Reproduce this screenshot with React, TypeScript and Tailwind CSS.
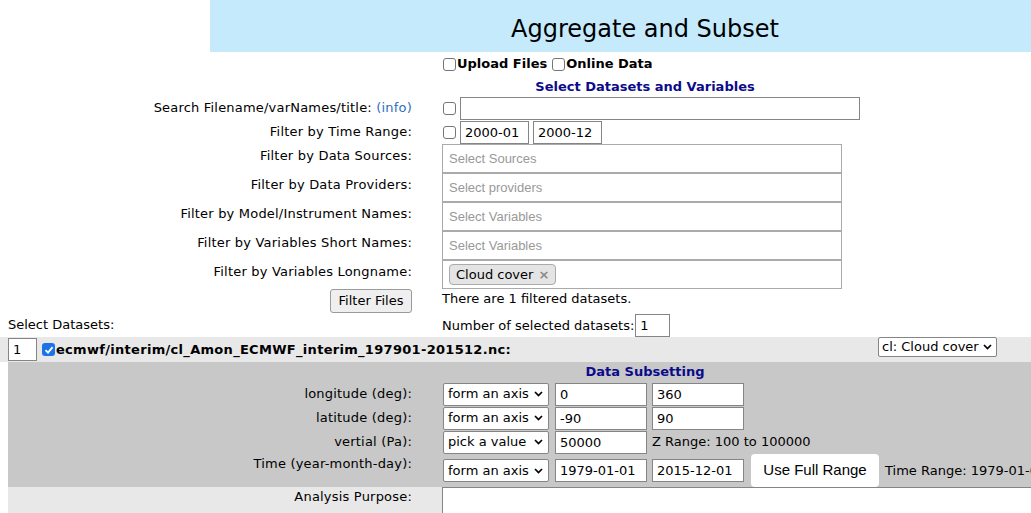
import React from "react";

function Box({ checked = false, className = "" }: { checked?: boolean; className?: string }) {
  if (checked) {
    return (
      <div className={`w-[13px] h-[13px] shrink-0 rounded-[3px] bg-[#1a73e8] flex items-center justify-center ${className}`}>
        <svg width="10" height="10" viewBox="0 0 10 10">
          <path d="M1.5 5.2 L4 7.6 L8.6 2.2" stroke="white" strokeWidth="1.8" fill="none" />
        </svg>
      </div>
    );
  }
  return <div className={`w-[13px] h-[13px] shrink-0 rounded-[3px] border border-[#767676] bg-white ${className}`} />;
}

function Field({ value = "", className = "" }: { value?: string; className?: string }) {
  return (
    <input
      readOnly
      value={value}
      className={`h-[23px] shrink-0 border border-[#858585] bg-white px-[4px] text-[13px] outline-none ${className}`}
    />
  );
}

function Chevron() {
  return (
    <svg width="9" height="6" viewBox="0 0 9 6" className="shrink-0">
      <path d="M1 1 L4.5 4.5 L8 1" stroke="black" strokeWidth="1.7" fill="none" />
    </svg>
  );
}

function Pick({ text, className = "" }: { text: string; className?: string }) {
  return (
    <div className={`h-[23px] w-[106px] shrink-0 flex items-center justify-between border border-[#858585] rounded-[2px] bg-white pl-[4px] pr-[5px] ${className}`}>
      <span>{text}</span>
      <Chevron />
    </div>
  );
}

function Row({ label, children, className = "" }: { label: React.ReactNode; children?: React.ReactNode; className?: string }) {
  return (
    <div className={`flex items-center ${className}`}>
      <div className="w-[412px] shrink-0 text-right whitespace-nowrap tracking-[0.2px]">{label}</div>
      <div className="ml-[30px] flex items-center whitespace-nowrap">{children}</div>
    </div>
  );
}

function BoxRow({ label, children }: { label: string; children?: React.ReactNode }) {
  return (
    <div className="flex items-start h-[29px]">
      <div className="w-[412px] shrink-0 text-right whitespace-nowrap tracking-[0.2px] pt-[2px]">{label}</div>
      <div className="ml-[30px]">{children}</div>
    </div>
  );
}

function SubRow({ label, children, className = "" }: { label: string; children?: React.ReactNode; className?: string }) {
  return (
    <div className={`flex items-center ${className}`}>
      <div className="w-[404px] shrink-0 text-right whitespace-nowrap tracking-[0.2px]">{label}</div>
      <div className="ml-[30px] flex items-center whitespace-nowrap">{children}</div>
    </div>
  );
}

function Multi({ placeholder, children }: { placeholder?: string; children?: React.ReactNode }) {
  return (
    <div className="h-[29px] w-[400px] border border-[#aaaaaa] bg-white flex items-center pl-[6px]">
      {placeholder ? (
        <span className="font-['Liberation_Sans',Arial,sans-serif] text-[13px] text-[#999999]">{placeholder}</span>
      ) : (
        children
      )}
    </div>
  );
}

export default function App() {
  return (
    <div className="w-[1031px] h-[513px] overflow-hidden bg-white font-['DejaVu_Sans',Verdana,sans-serif] text-[13px] text-black">
      <div className="w-[1080px]">
        <div className="ml-[210px] w-[870px] h-[52px] bg-[#c4eafc] flex items-center justify-center pt-[6px] text-[24px]">
          Aggregate and Subset
        </div>

        <div className="h-[24px] flex items-center pl-[443px] font-bold">
          <Box />
          <span className="ml-[1px]">Upload Files</span>
          <Box className="ml-[5px]" />
          <span className="ml-[1px]">Online Data</span>
        </div>

        <div className="ml-[210px] w-[870px] h-[20px] flex items-center justify-center font-bold text-[#0b0b8a] pt-[2px]">
          Select Datasets and Variables
        </div>

        <Row
          className="h-[24px]"
          label={
            <>
              Search Filename/varNames/title: <span className="text-[#2f6fba]">(info)</span>
            </>
          }
        >
          <Box className="ml-[1px]" />
          <Field className="ml-[4px] w-[400px]" />
        </Row>

        <Row className="h-[24px]" label="Filter by Time Range:">
          <Box className="ml-[1px]" />
          <Field value="2000-01" className="ml-[4px] w-[69px]" />
          <Field value="2000-12" className="ml-[4px] w-[69px]" />
        </Row>

        <BoxRow label="Filter by Data Sources:">
          <Multi placeholder="Select Sources" />
        </BoxRow>
        <BoxRow label="Filter by Data Providers:">
          <Multi placeholder="Select providers" />
        </BoxRow>
        <BoxRow label="Filter by Model/Instrument Names:">
          <Multi placeholder="Select Variables" />
        </BoxRow>
        <BoxRow label="Filter by Variables Short Names:">
          <Multi placeholder="Select Variables" />
        </BoxRow>
        <BoxRow label="Filter by Variables Longname:">
          <Multi>
            <div className="h-[21px] flex items-center gap-[5px] rounded-[4px] border border-[#aaaaaa] bg-[#e4e4e4] px-[6px]">
              <span>Cloud cover</span>
              <span className="font-bold text-[#888888]">×</span>
            </div>
          </Multi>
        </BoxRow>

        <div className="h-[25px] flex items-start">
          <div className="w-[412px] shrink-0 flex justify-end">
            <button className="h-[24px] w-[82px] rounded-[3px] border border-[#9a9a9a] bg-[#efefef] text-[13px]">
              Filter Files
            </button>
          </div>
          <div className="ml-[30px] h-[19px] flex items-center">There are 1 filtered datasets.</div>
        </div>

        <div className="h-[23px] flex items-start">
          <div className="w-[412px] shrink-0 pl-[8px] pt-[1px]">Select Datasets:</div>
          <div className="ml-[30px] flex items-center">
            Number of selected datasets:
            <Field value="1" className="ml-[1px] w-[35px]" />
          </div>
        </div>

        <div className="h-[25px] bg-[#e8e8e8] flex items-center pl-[8px]">
          <Field value="1" className="w-[29px]" />
          <Box checked className="ml-[5px]" />
          <span className="ml-[1px] font-bold tracking-[0.3px]">ecmwf/interim/cl_Amon_ECMWF_interim_197901-201512.nc:</span>
          <div className="ml-auto mr-[83px] self-start h-[20px] w-[119px] flex items-center justify-between border border-[#858585] rounded-[2px] bg-white pl-[3px] pr-[4px]">
            <span>cl: Cloud cover</span>
            <Chevron />
          </div>
        </div>

        <div className="ml-[8px] h-[125px] bg-[#c8c8c8]">
          <div className="ml-[202px] w-[870px] h-[20px] flex items-center justify-center font-bold text-[#0b0b8a]">
            Data Subsetting
          </div>
          <SubRow className="h-[24px]" label="longitude (deg):">
            <Pick text="form an axis" className="ml-[1px]" />
            <Field value="0" className="ml-[6px] w-[92px]" />
            <Field value="360" className="ml-[5px] w-[92px]" />
          </SubRow>
          <SubRow className="h-[24px]" label="latitude (deg):">
            <Pick text="form an axis" className="ml-[1px]" />
            <Field value="-90" className="ml-[6px] w-[92px]" />
            <Field value="90" className="ml-[5px] w-[92px]" />
          </SubRow>
          <SubRow className="h-[24px]" label="vertial (Pa):">
            <Pick text="pick a value" className="ml-[1px]" />
            <Field value="50000" className="ml-[6px] w-[92px]" />
            <span className="ml-[5px]">Z Range: 100 to 100000</span>
          </SubRow>
          <div className="h-[33px] flex items-start">
            <div className="w-[404px] shrink-0 text-right whitespace-nowrap tracking-[0.2px]">Time (year-month-day):</div>
            <div className="ml-[30px] h-[33px] flex items-center whitespace-nowrap">
              <Pick text="form an axis" className="ml-[1px]" />
              <Field value="1979-01-01" className="ml-[6px] w-[92px]" />
              <Field value="2015-12-01" className="ml-[5px] w-[92px]" />
              <button className="ml-[7px] h-[33px] w-[128px] rounded-[4px] bg-white font-['Liberation_Sans',Arial,sans-serif] text-[15px]">
                Use Full Range
              </button>
              <span className="ml-[6px]">Time Range: 1979-01-01 to 2015-12-01</span>
            </div>
          </div>
        </div>

        <div className="ml-[8px] h-[40px] bg-[#e8e8e8] flex items-start">
          <div className="w-[404px] shrink-0 text-right tracking-[0.2px]">Analysis Purpose:</div>
          <textarea readOnly className="ml-[30px] h-[60px] w-[640px] resize-none border border-[#858585] bg-white outline-none" />
        </div>
      </div>
    </div>
  );
}
